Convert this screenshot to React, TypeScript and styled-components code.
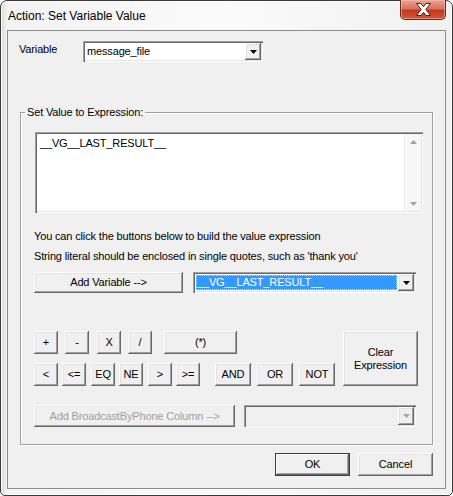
import styled, { createGlobalStyle } from 'styled-components';

const GlobalStyle = createGlobalStyle`
  html, body { margin: 0; padding: 0; background: #ffffff; }
  body { font-family: 'Liberation Sans', Arial, sans-serif; font-size: 11px; color: #000; }
  * { box-sizing: border-box; }
`;

const raised = `
  box-shadow: inset -1px -1px #696969, inset 1px 1px #ffffff, inset -2px -2px #a0a0a0, inset 2px 2px #e3e3e3;
`;

const sunken = `
  box-shadow: inset 1px 1px #a0a0a0, inset 2px 2px #696969, inset -1px -1px #ffffff, inset -2px -2px #e3e3e3;
`;

const Window = styled.div`
  width: 453px;
  height: 496px;
  display: flex;
  flex-direction: column;
  padding: 0 6px 6px;
  border: 1px solid #3a3a3a;
  border-radius: 7px 7px 5px 5px;
  background: linear-gradient(90deg, #d9d9d9 0, #f3f3f3 6px, #fafafa 50%, #f1f1f1 100%);
  box-shadow: inset 0 0 0 1px #ffffff;
`;

const TitleBar = styled.div`
  height: 29px;
  display: flex;
  justify-content: space-between;
  align-items: flex-start;
`;

const Title = styled.div`
  padding: 8px 0 0 1px;
  font-family: 'Liberation Sans', Arial, sans-serif;
  font-size: 12px;
  color: #000;
`;

const CloseButton = styled.div`
  width: 46px;
  height: 20px;
  margin: -1px 0 0 0;
  display: flex;
  align-items: center;
  justify-content: center;
  border: 1px solid #6a2a1e;
  border-top: none;
  border-radius: 0 0 5px 5px;
  background: linear-gradient(#e9a493 0, #d7735d 45%, #c3391f 55%, #d0583b 100%);
  box-shadow: inset 0 0 0 1px rgba(255, 200, 190, 0.5);
`;

const Client = styled.div`
  flex: 1;
  display: flex;
  flex-direction: column;
  padding: 10px 12px 0;
  border: 1px solid #8d8d8d;
  background: #f0f0f0;
  letter-spacing: -0.15px;
`;

const VarRow = styled.div`
  display: flex;
  align-items: flex-start;
`;

const Label = styled.div`
  width: 64px;
  padding-top: 2px;
  margin-left: -1px;
`;

const Combo = styled.div<{ $w: number; $h?: number; $disabled?: boolean }>`
  width: ${p => p.$w}px;
  height: ${p => p.$h ?? 21}px;
  display: flex;
  padding: 2px;
  background: ${p => (p.$disabled ? '#f0f0f0' : '#ffffff')};
  ${sunken}
`;

const ComboText = styled.div<{ $selected?: boolean }>`
  flex: 1;
  margin: 1px;
  padding-left: 1px;
  line-height: 15px;
  white-space: nowrap;
  color: ${p => (p.$selected ? '#ffffff' : '#000')};
  background: ${p => (p.$selected ? '#3399ff' : 'transparent')};
  outline: ${p => (p.$selected ? '1px dotted #b9dcff' : 'none')};
  outline-offset: -1px;
`;

const ArrowButton = styled.div`
  width: 16px;
  display: flex;
  align-items: center;
  justify-content: center;
  background: #f0f0f0;
  ${raised}
`;

const Group = styled.fieldset`
  margin: 44px 0 0;
  padding: 0 9px 17px 13px;
  border: 1px solid #a0a0a0;
  box-shadow: 1px 1px #ffffff, inset 1px 1px #ffffff;
  display: flex;
  flex-direction: column;
  align-items: flex-start;
`;

const Legend = styled.legend`
  margin-left: -9px;
  padding: 0 2px;
  line-height: 13px;
`;

const TextBox = styled.div`
  width: 388px;
  height: 81px;
  margin: 13px 0 0 1px;
  display: flex;
  padding: 2px;
  background: #ffffff;
  ${sunken}
`;

const TextContent = styled.div`
  flex: 1;
  padding: 2px 0 0 3px;
  line-height: 14px;
`;

const ScrollBar = styled.div`
  width: 17px;
  display: flex;
  flex-direction: column;
  justify-content: space-between;
  align-items: center;
  padding: 6px 0 5px;
  background: #f7f7f7;
  border-left: 1px solid #ececec;
`;

const Hints = styled.div`
  margin-top: 13px;
  display: flex;
  flex-direction: column;
`;

const Hint = styled.div`
  line-height: 20px;
`;

const Row = styled.div<{ $mt: number }>`
  display: flex;
  align-items: flex-start;
  margin-top: ${p => p.$mt}px;
`;

const Btn = styled.button<{ $w: number; $h?: number; $ml?: number }>`
  width: ${p => p.$w}px;
  height: ${p => p.$h ?? 23}px;
  margin: 0 0 0 ${p => p.$ml ?? 0}px;
  padding: 0;
  border: none;
  background: #f0f0f0;
  font-family: 'Liberation Sans', Arial, sans-serif;
  font-size: 11px;
  line-height: 13px;
  letter-spacing: -0.15px;
  color: ${p => (p.disabled ? '#a0a0a0' : '#000')};
  ${raised}
`;

const DefaultBtn = styled(Btn)`
  box-shadow: inset 0 0 0 1px #3c3c3c, inset -2px -2px #696969, inset 2px 2px #ffffff, inset -3px -3px #a0a0a0;
`;

const Keypad = styled.div`
  display: flex;
  align-items: flex-start;
  margin-top: 38px;
`;

const KeyRows = styled.div`
  display: flex;
  flex-direction: column;
  gap: 9px;
`;

const KeyRow = styled.div`
  display: flex;
`;

const Footer = styled.div`
  display: flex;
  justify-content: flex-end;
  gap: 8px;
  margin-top: 8px;
`;

const DownArrow = ({ color = '#000' }: { color?: string }) => (
  <svg width="7" height="4" viewBox="0 0 7 4">
    <path d="M0 0h7L3.5 4z" fill={color} />
  </svg>
);

const UpArrow = ({ color = '#a3a3a3' }: { color?: string }) => (
  <svg width="7" height="4" viewBox="0 0 7 4">
    <path d="M0 4h7L3.5 0z" fill={color} />
  </svg>
);

const row1 = [
  { t: '+', w: 24, ml: 0 },
  { t: '-', w: 24, ml: 7 },
  { t: 'X', w: 24, ml: 8 },
  { t: '/', w: 24, ml: 7 },
  { t: '(*)', w: 73, ml: 12 },
];

const row2 = [
  { t: '<', w: 24, ml: 0 },
  { t: '<=', w: 24, ml: 4 },
  { t: 'EQ', w: 24, ml: 5 },
  { t: 'NE', w: 24, ml: 4 },
  { t: '>', w: 24, ml: 5 },
  { t: '>=', w: 24, ml: 4 },
  { t: 'AND', w: 36, ml: 15 },
  { t: 'OR', w: 36, ml: 6 },
  { t: 'NOT', w: 36, ml: 6 },
];

export default function App() {
  return (
    <>
      <GlobalStyle />
      <Window>
        <TitleBar>
          <Title>Action: Set Variable Value</Title>
          <CloseButton>
            <svg width="17" height="13" viewBox="0 0 17 13">
              <path
                d="M1.5 0.5h4.5l2.5 3.2 2.5-3.2h4.5l-4.7 6 4.7 6h-4.5l-2.5-3.2-2.5 3.2h-4.5l4.7-6z"
                fill="#ffffff"
                stroke="#5a1f14"
                strokeWidth="1"
                strokeLinejoin="round"
              />
            </svg>
          </CloseButton>
        </TitleBar>
        <Client>
          <VarRow>
            <Label>Variable</Label>
            <Combo $w={180}>
              <ComboText>message_file</ComboText>
              <ArrowButton>
                <DownArrow />
              </ArrowButton>
            </Combo>
          </VarRow>

          <Group>
            <Legend>Set Value to Expression:</Legend>
            <TextBox>
              <TextContent>__VG__LAST_RESULT__</TextContent>
              <ScrollBar>
                <UpArrow />
                <DownArrow color="#a3a3a3" />
              </ScrollBar>
            </TextBox>

            <Hints>
              <Hint>You can click the buttons below to build the value expression</Hint>
              <Hint>String literal should be enclosed in single quotes, such as 'thank you'</Hint>
            </Hints>

            <Row $mt={6}>
              <Btn $w={149} $h={21}>Add Variable --&gt;</Btn>
              <Combo $w={223} $h={21} style={{ marginLeft: 10 }}>
                <ComboText $selected>__VG__LAST_RESULT__</ComboText>
                <ArrowButton>
                  <DownArrow />
                </ArrowButton>
              </Combo>
            </Row>

            <Keypad>
              <KeyRows>
                <KeyRow>
                  {row1.map(k => (
                    <Btn key={k.t} $w={k.w} $ml={k.ml}>{k.t}</Btn>
                  ))}
                </KeyRow>
                <KeyRow>
                  {row2.map(k => (
                    <Btn key={k.t} $w={k.w} $ml={k.ml}>{k.t}</Btn>
                  ))}
                </KeyRow>
              </KeyRows>
              <Btn $w={75} $h={55} $ml={8}>Clear<br />Expression</Btn>
            </Keypad>

            <Row $mt={19}>
              <Btn $w={201} $h={22} disabled>Add BroadcastByPhone Column --&gt;</Btn>
              <Combo $w={172} $h={22} $disabled style={{ marginLeft: 9 }}>
                <ComboText />
                <ArrowButton>
                  <DownArrow color="#a3a3a3" />
                </ArrowButton>
              </Combo>
            </Row>
          </Group>

          <Footer>
            <DefaultBtn $w={75}>OK</DefaultBtn>
            <Btn $w={75}>Cancel</Btn>
          </Footer>
        </Client>
      </Window>
    </>
  );
}
